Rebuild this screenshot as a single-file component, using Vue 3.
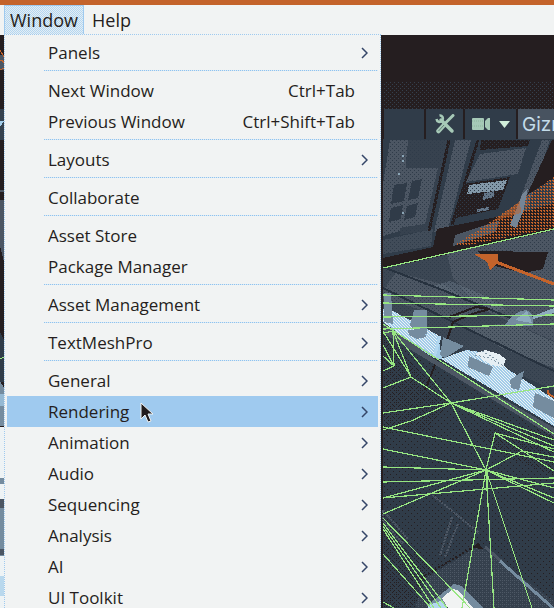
<script setup>
const groups = [
  [{ label: 'Panels', sub: true }],
  [
    { label: 'Next Window', keys: 'Ctrl+Tab' },
    { label: 'Previous Window', keys: 'Ctrl+Shift+Tab' },
  ],
  [{ label: 'Layouts', sub: true }],
  [{ label: 'Collaborate' }],
  [{ label: 'Asset Store' }, { label: 'Package Manager' }],
  [{ label: 'Asset Management', sub: true }],
  [{ label: 'TextMeshPro', sub: true }],
  [
    { label: 'General', sub: true },
    { label: 'Rendering', sub: true, active: true },
    { label: 'Animation', sub: true },
    { label: 'Audio', sub: true },
    { label: 'Sequencing', sub: true },
    { label: 'Analysis', sub: true },
    { label: 'AI', sub: true },
    { label: 'UI Toolkit', sub: true },
  ],
]

// Wireframe segments: x1 y1 x2 y2
const wires = [
  [383, 268, 554, 229], [383, 295, 554, 300], [383, 303, 554, 306],
  [383, 317, 554, 315], [383, 329, 554, 324],
  [383, 324, 554, 434], [383, 331, 411, 377], [383, 345, 394, 366],
  [393, 331, 394, 366], [393, 331, 411, 377], [393, 331, 451, 403],
  [383, 333, 394, 331], [383, 356, 394, 366], [394, 366, 383, 371],
  [383, 388, 411, 377], [411, 377, 451, 403],
  [383, 413, 451, 403], [451, 403, 554, 386],
  [451, 403, 486, 470], [451, 403, 554, 446], [451, 403, 554, 452],
  [451, 403, 554, 440], [383, 430, 411, 421], [411, 421, 451, 403],
  [383, 427, 554, 462], [383, 449, 486, 470], [383, 467, 486, 470],
  [383, 482, 554, 478], [383, 498, 554, 483], [383, 498, 486, 470],
  [383, 514, 486, 470], [486, 470, 522, 451], [522, 451, 554, 457],
  [495, 433, 486, 470], [495, 433, 554, 449], [495, 433, 554, 471],
  [486, 470, 554, 488], [486, 470, 554, 498], [486, 470, 554, 503],
  [486, 470, 462, 608], [486, 470, 494, 608], [486, 470, 532, 608],
  [487, 470, 487, 491],
  [383, 518, 470, 608], [383, 523, 447, 608], [383, 526, 441, 608],
  [383, 529, 434, 608], [383, 554, 431, 608], [383, 602, 394, 608],
  [0, 359, 4, 357],
]
</script>

<template>
  <div class="app">
    <nav class="menubar" aria-label="Main menu">
      <button type="button" class="top open">Window</button>
      <button type="button" class="top">Help</button>
    </nav>

    <main class="workspace">
      <svg class="scene" viewBox="0 35 554 573" preserveAspectRatio="xMinYMin slice" aria-hidden="true">
        <defs>
          <pattern id="specks" width="4" height="4" patternUnits="userSpaceOnUse">
            <path d="M0 0h1v1H0zM2 2h1v1H2z" fill="#251e20" />
          </pattern>
          <pattern id="sparse" width="6" height="6" patternUnits="userSpaceOnUse">
            <path d="M0 0h1v1H0zM3 3h1v1H3z" fill="#251e20" />
          </pattern>
          <pattern id="slatedots" width="4" height="4" patternUnits="userSpaceOnUse">
            <path d="M0 0h1v1H0zM2 2h1v1H2z" fill="#35404d" />
          </pattern>
          <pattern id="grain" width="4" height="4" patternUnits="userSpaceOnUse">
            <path d="M0 0h1v1H0zM2 2h1v1H2z" fill="#2f3b49" />
          </pattern>
          <pattern id="mist" width="4" height="4" patternUnits="userSpaceOnUse">
            <path d="M0 0h1v1H0zM2 2h1v1H2zM2 0h1v1H2z" fill="#4d5865" />
          </pattern>
          <pattern id="ember" width="3" height="3" patternUnits="userSpaceOnUse">
            <path d="M0 0h2v1H0zM1 1h1v1H1z" fill="#c4632b" />
          </pattern>
          <pattern id="frost" width="3" height="3" patternUnits="userSpaceOnUse">
            <path d="M0 0h1v1H0zM1 1h1v1H1zM2 2h1v1H2z" fill="#edf3f5" />
          </pattern>
        </defs>
        <g shape-rendering="crispEdges">
          <rect y="35" width="554" height="573" fill="#251e20" />
          <rect x="383" y="82" width="171" height="28" fill="url(#slatedots)" />
          <rect x="383" y="139" width="171" height="469" fill="#303c49" />

          <!-- back wall -->
          <path d="M390 140h18l-8 91-17 5v-52z" fill="#4c5663" />
          <path d="M408 140h40l-18 90-30 5z" fill="#37424f" />
          <path d="M400 168h38l-13 56-33 5-6-30z" fill="#4c5663" />
          <path d="M394 185l13-2-3 18-13 3zM412 181l10-2-4 19-10 2zM391 208l12-3-2 14-12 3zM407 206l11-3-3 14-11 3z" fill="#303b48" />
          <path d="M383 240l50-11-2 17-48 8z" fill="#414c59" />
          <path d="M455 140h16l-23 89-14 3z" fill="#4c5663" />
          <path d="M449 140l-20 91M478 140l-26 85" stroke="#251e20" stroke-width="3" fill="none" />
          <path d="M481 140h49l-2 6-48 4z" fill="#251e20" />
          <path d="M480 154l46-6-8 26-52 8z" fill="#4c5663" />
          <path d="M464 184l46-7-12 32-42 9z" fill="#251e20" />
          <path d="M469 185l38-5-4 10-36 4z" fill="#8398a8" />
          <path d="M484 193l10-2v6l-11 3zM477 209l12-2v3l-12 2z" fill="#657789" />
          <path d="M542 140h8l-30 89-9-4 12-34z" fill="#4c5663" />
          <path d="M383 140h171v95l-171 30z" fill="url(#grain)" />
          <path d="M552 140h2v38l-27 17z" fill="#251e20" />
          <path d="M383 258l50-11 4-18 90-18 27-8v31l-171 34z" fill="#251e20" />
          <path d="M455 235l45-15-4 12-43 14z" fill="#4c5663" />
          <path d="M554 177l-26 18-18 13-20 14-35 23 8 1 91-18z" fill="url(#ember)" />
          <path d="M528 188l-5 24-7 16-6-3 12-30z" fill="#758596" />
          <path d="M492 222l29-9-1-12z" fill="#c4632b" opacity=".5" />
          <path d="M403 155v10M398 174h4M402 213h4" stroke="#8aa4b5" stroke-width="2" stroke-dasharray="2 3" />

          <!-- deck -->
          <path d="M383 269l171-39v160L383 315z" fill="#3c4754" />
          <path d="M447 254l107-24v111l-73-32-28-31z" fill="#4c5663" />
          <path d="M396 272l49 13 37 24-24 11-75-21v-8z" fill="#4c5663" />
          <path d="M433 286l17-5 38 16 18 13-16 1z" fill="#657382" opacity=".5" />
          <path d="M466 327l46-4 42 19v26l-52-20z" fill="#525d69" />
          <path d="M383 269l171-39v160L383 315z" fill="url(#grain)" />
          <path d="M477 251l71 1-5 17-20 4-32-8z" fill="#251e20" />
          <path d="M383 267l62 24 68 28M383 288l171 83" stroke="#27323f" stroke-width="2" fill="none" />
          <path d="M449 317l27-10 14 2-18 5-19 8-12 36" stroke="#251e20" stroke-width="2" fill="none" />
          <path d="M504 326c6-8 12-15 22-16 5 0 9 9 7 16z" fill="#758c9f" />
          <path d="M515 320l12-9 5 12zM533 316l21-8v5l-21 6z" fill="#8eabbf" />
          <path d="M474 254h24v8l-8 8-3-8z" fill="#c4632b" />
          <path d="M496 262l58 22" stroke="#c4632b" stroke-width="3" />

          <!-- display case -->
          <path d="M383 309l8 1 47 25 4 24-8-1-51-32z" fill="#a2cce9" />
          <path d="M383 309l8 1 47 25-4 20-51-31z" fill="url(#frost)" />
          <path d="M441 359l25-9 29 4 11 14 48 31v27z" fill="#a2cce9" />
          <path d="M441 359l25-9 29 4 11 14 48 31v27z" fill="url(#frost)" />
          <path d="M443 337l21 9-19 12-5-3z" fill="#758c9f" />
          <path d="M384 293h7l2 31-9-2zM414 310h13v24l-10-1-7-8zM408 330h16l2 7-9 2-8-4z" fill="#758c9f" />
          <path d="M469 356l24 11-4 9-21-9zM510 380l10-7 4-2-5 19-8-2zM535 393l19 8v17l-21-11z" fill="#758c9f" />
          <path d="M475 354l10-4 14 4 7 5-3 8-12-2z" fill="#e6eff4" />
          <path d="M475 355l14 3 15 8M482 351l17 10" stroke="#8298a8" stroke-dasharray="2 2" fill="none" />
          <path d="M440 336l-6 22" stroke="#b2d7ef" stroke-width="3" />
          <path d="M437 360l-12 30" stroke="#251e20" stroke-width="2" />
          <path d="M383 322l51 37 120 69v9L383 333z" fill="#4c5663" />
          <path d="M548 390q-2 4 6 7" stroke="#c4632b" stroke-width="2" fill="none" />

          <!-- lower floor -->
          <path d="M383 335l171 103v170H383z" fill="url(#sparse)" />
          <path d="M383 335l68 67-25 30-43 3zM470 430h84v45l-46-17z" fill="url(#specks)" />
          <path d="M383 530l52 40-13 38h-39z" fill="url(#specks)" />
          <path d="M426 578l53-32 75 55v7H415z" fill="#35404d" />
          <path d="M426 578l53-32 75 55v7H415z" fill="url(#mist)" />
          <path d="M383 510l24 28-5 5-19-23zM430 493l49 40M452 517l-12 38M458 524l-13 33" stroke="#4c5663" stroke-width="2" stroke-dasharray="2 1" fill="none" />
          <path d="M421 578l54-32" stroke="#251e20" stroke-width="2" stroke-dasharray="2 2" fill="none" />
          <path d="M472 548l6-6 5 7z" fill="#251e20" />
          <path d="M485 547l16 14" stroke="#4c5663" stroke-width="3" />
          <path d="M500 561l54 48" stroke="#758c9f" stroke-width="3" />
          <path d="M426 606l28-22 8 2 22 23" fill="#758c9f" />
          <path d="M442 598l11-9 6 2 14 17h-25z" fill="#f1f3f3" />
          <path d="M429 605l11-4 7 7h-19z" fill="#b2d7ef" />

          <!-- strip left of the menu -->
          <path d="M0 55h4v15H0z" fill="#4c5663" />
          <path d="M0 60h2l2 3v5l-2 1H0M0 50l4 7" stroke="#c4632b" stroke-width="1" fill="none" />
          <path d="M0 109h4v31H0z" fill="#35414e" />
          <path d="M0 121h4l-3 5H0z" fill="#a2cce9" />
          <path d="M0 190h4v2H0zM0 200h4v62l-4-16z" fill="#4c5663" />
          <path d="M0 332l4 8v42H0z" fill="#303c49" />
          <path d="M0 381l4 7v38H0z" fill="#758c9f" />
          <path d="M0 427h4v181H0z" fill="#eef3f5" />
          <path d="M0 478h4v6H0zM0 507h4v49H0z" fill="#758c9f" />
          <path d="M0 499h4v9H0zM0 549h4v6H0z" fill="#4c5663" />
          <path d="M0 394h4v12H0zM0 576h4v20H0z" fill="#a2cce9" opacity=".7" />

          <g stroke="#97e681" stroke-width="1.2" fill="none">
            <line v-for="(w, i) in wires" :key="i" :x1="w[0]" :y1="w[1]" :x2="w[2]" :y2="w[3]" />
          </g>
        </g>
      </svg>

      <div class="toolbar" role="toolbar" aria-label="Scene view">
        <button type="button" class="tool blank" aria-label="Scene options"></button>
        <button type="button" class="tool tools" aria-label="Component tools">
          <svg width="20" height="20" viewBox="0 0 20 20" fill="none" stroke="#a6c9b7">
            <path d="M6 6l11 11" stroke-width="3.5" stroke-linecap="round" />
            <path d="M4.500 1.500C7 1 9 4 7 6.500S2 8 1.500 5" stroke-width="2.500" />
            <path d="M18 1.500L9.500 10" stroke-width="3" stroke-linecap="round" />
            <path d="M9 11l-5.500 6" stroke-width="4.500" stroke-linecap="round" />
            <path d="M9 11l-5.500 6" stroke="#5f7d75" stroke-width="1" />
          </svg>
        </button>
        <button type="button" class="tool camera" aria-label="Camera settings">
          <svg width="19" height="14" viewBox="0 0 19 14" fill="#a6c9b7">
            <rect y="1" width="12" height="12" rx="1" />
            <path d="M13 4l3-3h2v12h-2l-3-3z" />
            <path d="M0 4h12M0 9h12" stroke="#8bb49b" stroke-dasharray="1 1" />
          </svg>
          <svg width="11" height="7" viewBox="0 0 11 7"><path d="M0 0h11L5.500 7z" fill="#d1efdb" /></svg>
        </button>
        <button type="button" class="tool gizmos">Gizmos</button>
      </div>

      <div class="menu" role="menu" aria-label="Window">
        <div v-for="(group, g) in groups" :key="g" class="group" role="group">
          <button
            v-for="item in group"
            :key="item.label"
            type="button"
            role="menuitem"
            class="item"
            :class="{ active: item.active }"
          >
            <span>{{ item.label }}</span>
            <span v-if="item.keys" class="keys">{{ item.keys }}</span>
            <svg v-if="item.sub" class="chevron" width="7" height="12" viewBox="0 0 7 12">
              <path d="M1 1l5 5-5 5" fill="none" stroke="#354668" stroke-width="1.500" />
            </svg>
            <svg v-if="item.active" class="pointer" width="13" height="21" viewBox="0 0 13 21">
              <path d="M1 1v16l4-4 3 7 3-1-3-7h5z" fill="#211c1e" stroke="#f1f3f3" stroke-width="1" />
            </svg>
          </button>
        </div>
      </div>
    </main>
  </div>
</template>

<style>
body {
  background: #251e20;
  overflow: hidden;
}
</style>

<style scoped>
.app {
  display: flex;
  flex-direction: column;
  height: 100vh;
  overflow: hidden;
  box-sizing: border-box;
  border-top: 5px solid #c4632b;
  font-family: "Open Sans", "Noto Sans", sans-serif;
  font-size: 17px;
  color: #251e20;
}
button {
  margin: 0;
  padding: 0;
  border: 0;
  background: none;
  font: inherit;
  color: inherit;
}
.menubar {
  display: flex;
  flex: none;
  height: 30px;
  padding-left: 4px;
  background: #f1f3f3;
}
.top {
  padding: 0 7px;
  border: 1px solid transparent;
  font-size: 18px;
  line-height: 28px;
}
.top.open {
  padding: 0 5px;
  border-color: #9fcaef;
  background: repeating-conic-gradient(#b4d6f1 0 25%, #e4eef4 0 50%) 0 0 / 2px 2px;
}
.workspace {
  position: relative;
  flex: 1;
  min-height: 0;
}
.scene {
  position: absolute;
  inset: 0;
  width: 100%;
  height: 100%;
}
.toolbar {
  position: relative;
  display: flex;
  gap: 2px;
  padding-top: 74px;
  padding-left: 384px;
  overflow: hidden;
}
.tool {
  display: flex;
  flex: none;
  align-items: center;
  justify-content: center;
  height: 30px;
  background: #303c49;
}
.blank { width: 40px; }
.tools { width: 37px; }
.camera { width: 51px; gap: 8px; }
.gizmos {
  padding: 0 4px;
  background: #485360;
  color: #c4dcea;
  font-family: Inter, Roboto, sans-serif;
  font-size: 19px;
}
.menu {
  position: absolute;
  top: -1px;
  left: 4px;
  width: 377px;
  box-sizing: border-box;
  padding: 2px;
  border: 1px dotted #9fcaef;
  background: #f1f3f3;
}
.group + .group::before {
  content: "";
  display: block;
  height: 1px;
  margin: 2px 0 4px 37px;
  background: repeating-linear-gradient(90deg, #8fc3f0 0 1px, #dbe9f3 1px 2px);
}
.item {
  position: relative;
  display: flex;
  align-items: center;
  justify-content: space-between;
  width: 100%;
  height: 31px;
  padding: 0 23px 0 41px;
  line-height: 30px;
  text-align: left;
}
.item.active {
  background: #9fcaef;
}
.item .chevron {
  margin-right: -13px;
}
.pointer {
  position: absolute;
  left: 133px;
  top: 6px;
}
</style>
